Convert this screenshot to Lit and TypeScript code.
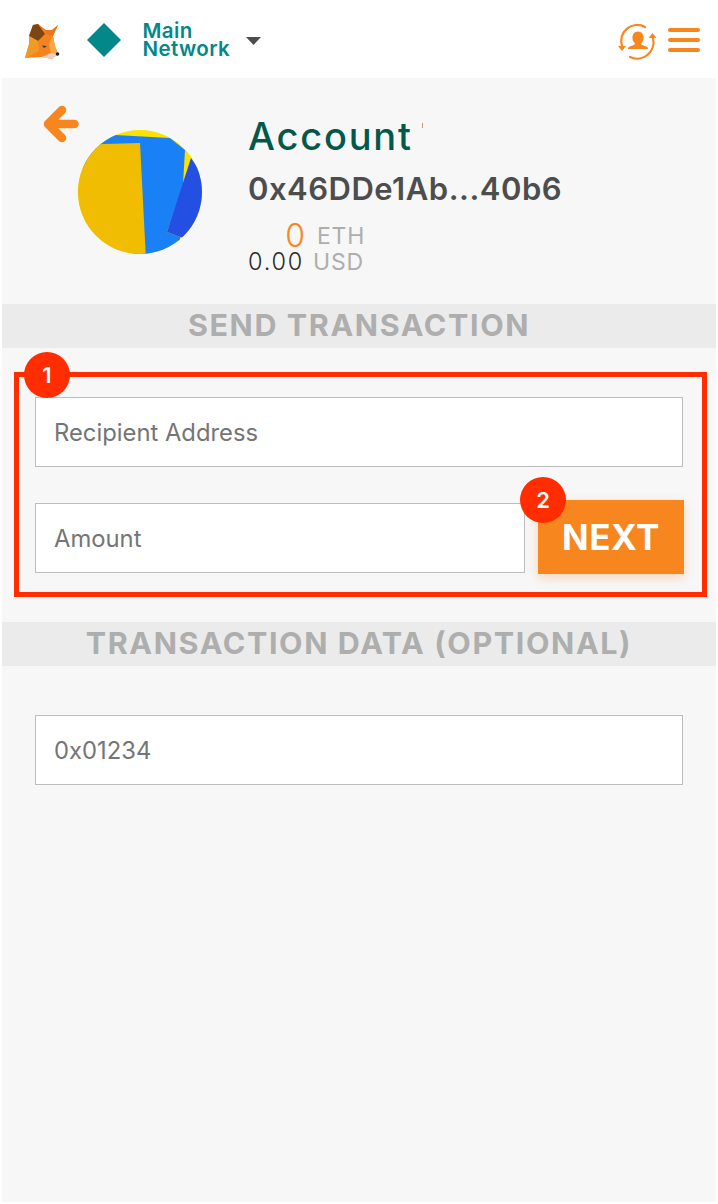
import { LitElement, html, css } from "lit";
import { customElement } from "lit/decorators.js";

@customElement("app-root")
export class AppRoot extends LitElement {
  static styles = css`
    :host { display: block; width: 718px; height: 1204px; background: #fff; font-family: Inter, "Liberation Sans", sans-serif; overflow: hidden; }
    .top { height: 78px; display: flex; align-items: center; background: #fff; box-sizing: border-box; padding: 2px 18px 0 24px; }
    .fox { width: 37px; height: 37px; display: block; margin-right: 26px; }
    .diamond { width: 34px; height: 34px; display: block; margin-right: 21.500px; }
    .net { color: #038789; font-size: 20.500px; line-height: 18px; font-weight: 600; letter-spacing: .4px; width: 103.500px; }
    .caret { width: 15px; height: 8px; margin-top: 2px; display: block; }
    .spacer { flex: 1; }
    .acct { width: 40px; height: 40px; display: block; margin: 2px 10px 0 0; }
    .menu { width: 32px; display: flex; flex-direction: column; gap: 6px; }
    .menu i { display: block; height: 4px; border-radius: 2px; background: #f7861c; }
    .main { margin: 0 2px; height: 1124px; background: #f7f7f7; display: flow-root; }
    .hero { height: 226px; position: relative; display: flex; }
    .back { position: absolute; left: 41px; top: 27px; width: 36px; height: 38px; }
    .avatar { width: 124px; height: 124px; margin: 52px 0 0 76px; display: block; flex: none; }
    .info { margin: 35px 0 0 46px; }
    .name { font-size: 38px; line-height: 46px; color: #03584b; font-weight: 500; letter-spacing: 1.800px; position: relative; width: 175px; }
    .name::after { content: ""; position: absolute; left: 174px; top: 10px; width: 1px; height: 5px; background: #c79a6c; }
    .addr { font-size: 31px; line-height: 38px; color: #4d4d4d; font-weight: 600; letter-spacing: .5px; margin-top: 11px; white-space: nowrap; }
    .bal { display: grid; grid-template-columns: 57px auto; column-gap: 8px; margin-top: 15px; justify-content: start; }
    .bal .n { text-align: right; }
    .eth { font-size: 32px; line-height: 26px; color: #f7861c; font-weight: 300; }
    .usd { font-size: 23.500px; line-height: 26px; color: #2a2a2a; font-weight: 300; letter-spacing: 1.800px; margin-right: 1px; }
    .cur { font-size: 23px; line-height: 26px; color: #aeaeae; letter-spacing: .8px; }
    .c1 { padding-left: 4px; }
    .band { height: 44px; background: #ebebeb; color: #aeaeae; font-size: 30.500px; font-weight: 700; letter-spacing: 1.600px; line-height: 42px; text-align: center; }
    .box { margin: 24px 9px 0 12px; height: 225px; border: 5px solid #ff2d00; box-sizing: border-box; position: relative; padding: 20px 19px 0 16px; }
    .input { background: #fff; border: 1px solid #bdbdbd; box-sizing: border-box; height: 70px; display: flex; align-items: center; padding-left: 18px; color: #757575; font-size: 23.800px; }
    .row { display: flex; margin-top: 36px; }
    .row .input { width: 490px; }
    .next { width: 146px; height: 74px; margin: -3px -1px 0 13px; background: #f8861e; color: #fff; font-size: 35px; font-weight: 700; letter-spacing: .6px; display: flex; align-items: center; justify-content: center; box-shadow: 0 4px 10px rgba(248,134,30,.28); }
    .badge { position: absolute; width: 46px; height: 46px; border-radius: 50%; background: #ff2d00; color: #fff; font-size: 22px; font-weight: 600; display: flex; align-items: center; justify-content: center; }
    .b1 { left: 5px; top: -25px; }
    .b2 { left: 501px; top: 100px; }
    .band2 { margin-top: 25px; }
    .data { margin: 49px 33px 0; }
  `;

  render() {
    return html`
      <div class="top">
        <svg class="fox" viewBox="0 0 37 37">
          <polygon points="5,14 9,3 14,2 22,8 28,8 34,3 29,14 31,24 34,32 28,37 18,35 1,36 5,22" fill="#f5841f"/>
          <polygon points="5,14 9,3 14,2 21,12 14,19" fill="#7d4514"/>
          <polygon points="21,12 22,8 28,8 34,3 29,14" fill="#e8781a"/>
          <polygon points="5,14 14,19 15,29 1,36 5,22" fill="#f09a2a"/>
          <polygon points="25,22 29,14 31,24 34,32 27,31" fill="#f8a84c"/>
          <polygon points="18,35 27,31 34,32 28,37" fill="#e4d3c3"/>
          <polygon points="18,23.500 23,24 20,26" fill="#23415e"/>
          <circle cx="33.500" cy="32" r="1.800" fill="#1c1c1c"/>
        </svg>
        <svg class="diamond" viewBox="0 0 34 34"><polygon points="17,0 34,17 17,34 0,17" fill="#038789"/></svg>
        <div class="net">Main<br />Network</div>
        <svg class="caret" viewBox="0 0 15 8"><polygon points="0,0 15,0 7.5,8" fill="#4d4d4d"/></svg>
        <div class="spacer"></div>
        <svg class="acct" viewBox="0 0 40 40" fill="none" stroke="#f7861c" stroke-width="2.200" stroke-linecap="round">
          <path d="M4 25 A16 16 0 0 1 27 6"/>
          <path d="M35 17 A16.500 16.500 0 0 1 12 36"/>
          <polygon points="0,25 8,25 4,30" fill="#f7861c" stroke="none"/>
          <polygon points="30.500,17 38.500,17 34.500,12" fill="#f7861c" stroke="none"/>
          <path d="M20 10.500c3.400 0 5.600 2.800 5.600 6 0 2.400-1 4.400-2.400 5.600v1.400l5.500 2.200c.8.300 1.300 1 1.300 2.300H10c0-1.300.5-2 1.300-2.300l5.500-2.200v-1.400c-1.400-1.200-2.400-3.200-2.400-5.600 0-3.200 2.200-6 5.600-6z" fill="#f7861c" stroke="none"/>
        </svg>
        <div class="menu"><i></i><i></i><i></i></div>
      </div>
      <div class="main">
        <div class="hero">
          <svg class="back" viewBox="0 0 36 38" fill="none" stroke="#f8861e" stroke-width="8.500" stroke-linecap="round" stroke-linejoin="round">
            <path d="M19 5 L5 19 L19 33 M5 19 H31.500"/>
          </svg>
          <svg class="avatar" viewBox="0 0 124 124">
            <defs><clipPath id="cp"><circle cx="62" cy="62" r="62"/></clipPath></defs>
            <g clip-path="url(#cp)">
              <rect width="124" height="124" fill="#f9e300"/>
              <polygon points="-5,22 37,5 92,8 107,20 105,55 89,102 102,107 102,130 60,130" fill="#1a80f6"/>
              <polygon points="-5,15 62,13 68,130 -5,130" fill="#f1bd02"/>
              <polygon points="113,28 135,60 120,112 102,107 89,102" fill="#2350e2"/>
            </g>
          </svg>
          <div class="info">
            <div class="name">Account</div>
            <div class="addr">0x46DDe1Ab...40b6</div>
            <div class="bal">
              <div class="n eth">0</div><div class="cur c1">ETH</div>
              <div class="n usd">0.00</div><div class="cur">USD</div>
            </div>
          </div>
        </div>
        <div class="band">SEND TRANSACTION</div>
        <div class="box">
          <div class="input">Recipient Address</div>
          <div class="row">
            <div class="input">Amount</div>
            <div class="next">NEXT</div>
          </div>
          <div class="badge b1">1</div>
          <div class="badge b2">2</div>
        </div>
        <div class="band band2">TRANSACTION DATA (OPTIONAL)</div>
        <div class="input data">0x01234</div>
      </div>
    `;
  }
}
